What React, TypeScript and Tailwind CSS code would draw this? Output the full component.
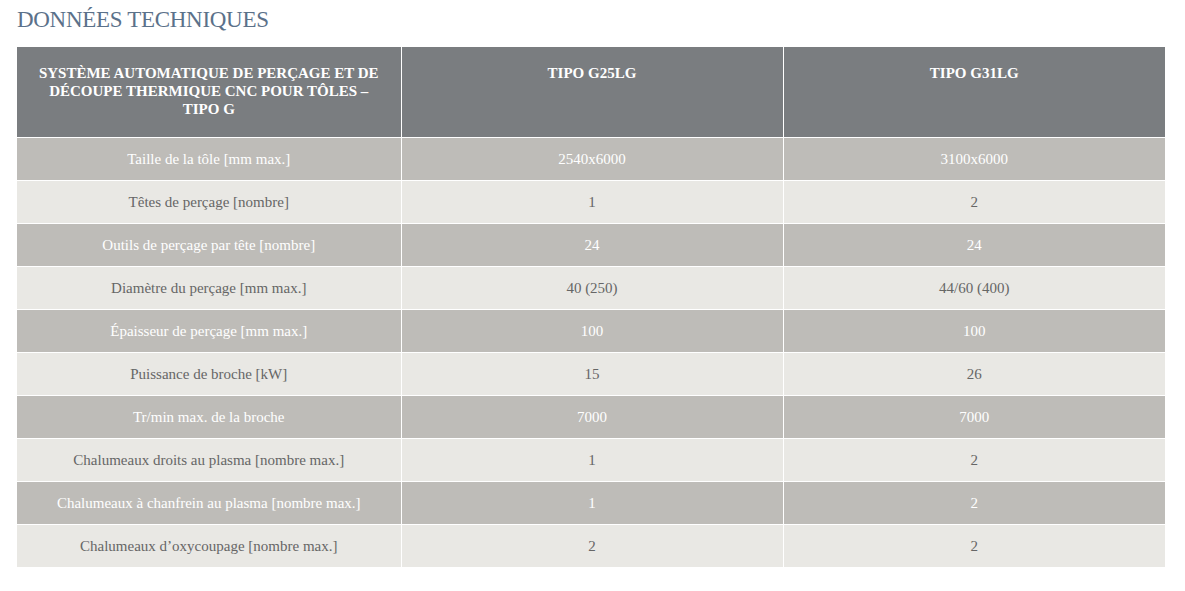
import React from "react";

const rows: [string, string, string][] = [
  ["Taille de la tôle [mm max.]", "2540x6000", "3100x6000"],
  ["Têtes de perçage [nombre]", "1", "2"],
  ["Outils de perçage par tête [nombre]", "24", "24"],
  ["Diamètre du perçage [mm max.]", "40 (250)", "44/60 (400)"],
  ["Épaisseur de perçage [mm max.]", "100", "100"],
  ["Puissance de broche [kW]", "15", "26"],
  ["Tr/min max. de la broche", "7000", "7000"],
  ["Chalumeaux droits au plasma [nombre max.]", "1", "2"],
  ["Chalumeaux à chanfrein au plasma [nombre max.]", "1", "2"],
  ["Chalumeaux d’oxycoupage [nombre max.]", "2", "2"],
];

export default function App() {
  return (
    <div className="min-h-screen bg-white pl-[17px] pr-5 pt-[5px] font-['Liberation_Serif',serif]">
      {/* Title */}
      <h2 className="text-[23px] leading-[29px] text-[#5b718a] tracking-[-0.3px]">DONNÉES TECHNIQUES</h2>

      {/* Spec table */}
      <table className="mt-[13px] w-[1148px] border-collapse table-fixed text-center">
        <colgroup>
          <col className="w-[384px]" />
          <col className="w-[382px]" />
          <col className="w-[382px]" />
        </colgroup>
        <thead>
          <tr className="bg-[#7a7d80] h-[90px]">
            <th className="border-r border-white align-top px-5 pt-[17px] text-[15px] leading-[18px] font-bold text-white">
              SYSTÈME AUTOMATIQUE DE PERÇAGE ET DE DÉCOUPE THERMIQUE CNC POUR TÔLES – TIPO G
            </th>
            <th className="border-r border-white align-top px-5 pt-[17px] text-[15px] leading-[18px] font-bold text-white">
              TIPO G25LG
            </th>
            <th className="align-top px-5 pt-[17px] text-[15px] leading-[18px] font-bold text-white">TIPO G31LG</th>
          </tr>
        </thead>
        <tbody>
          {rows.map((r, i) => {
            const dark = i % 2 === 0;
            return (
              <tr
                key={r[0]}
                className={`h-[43px] border-t border-white text-[15px] ${
                  dark ? "bg-[#bebcb8] text-white" : "bg-[#e9e8e4] text-[#666666]"
                }`}
              >
                <td className="border-r border-white align-middle px-3 pt-px">{r[0]}</td>
                <td className="border-r border-white align-middle px-3 pt-px">{r[1]}</td>
                <td className="align-middle px-3 pt-px">{r[2]}</td>
              </tr>
            );
          })}
        </tbody>
      </table>
    </div>
  );
}
